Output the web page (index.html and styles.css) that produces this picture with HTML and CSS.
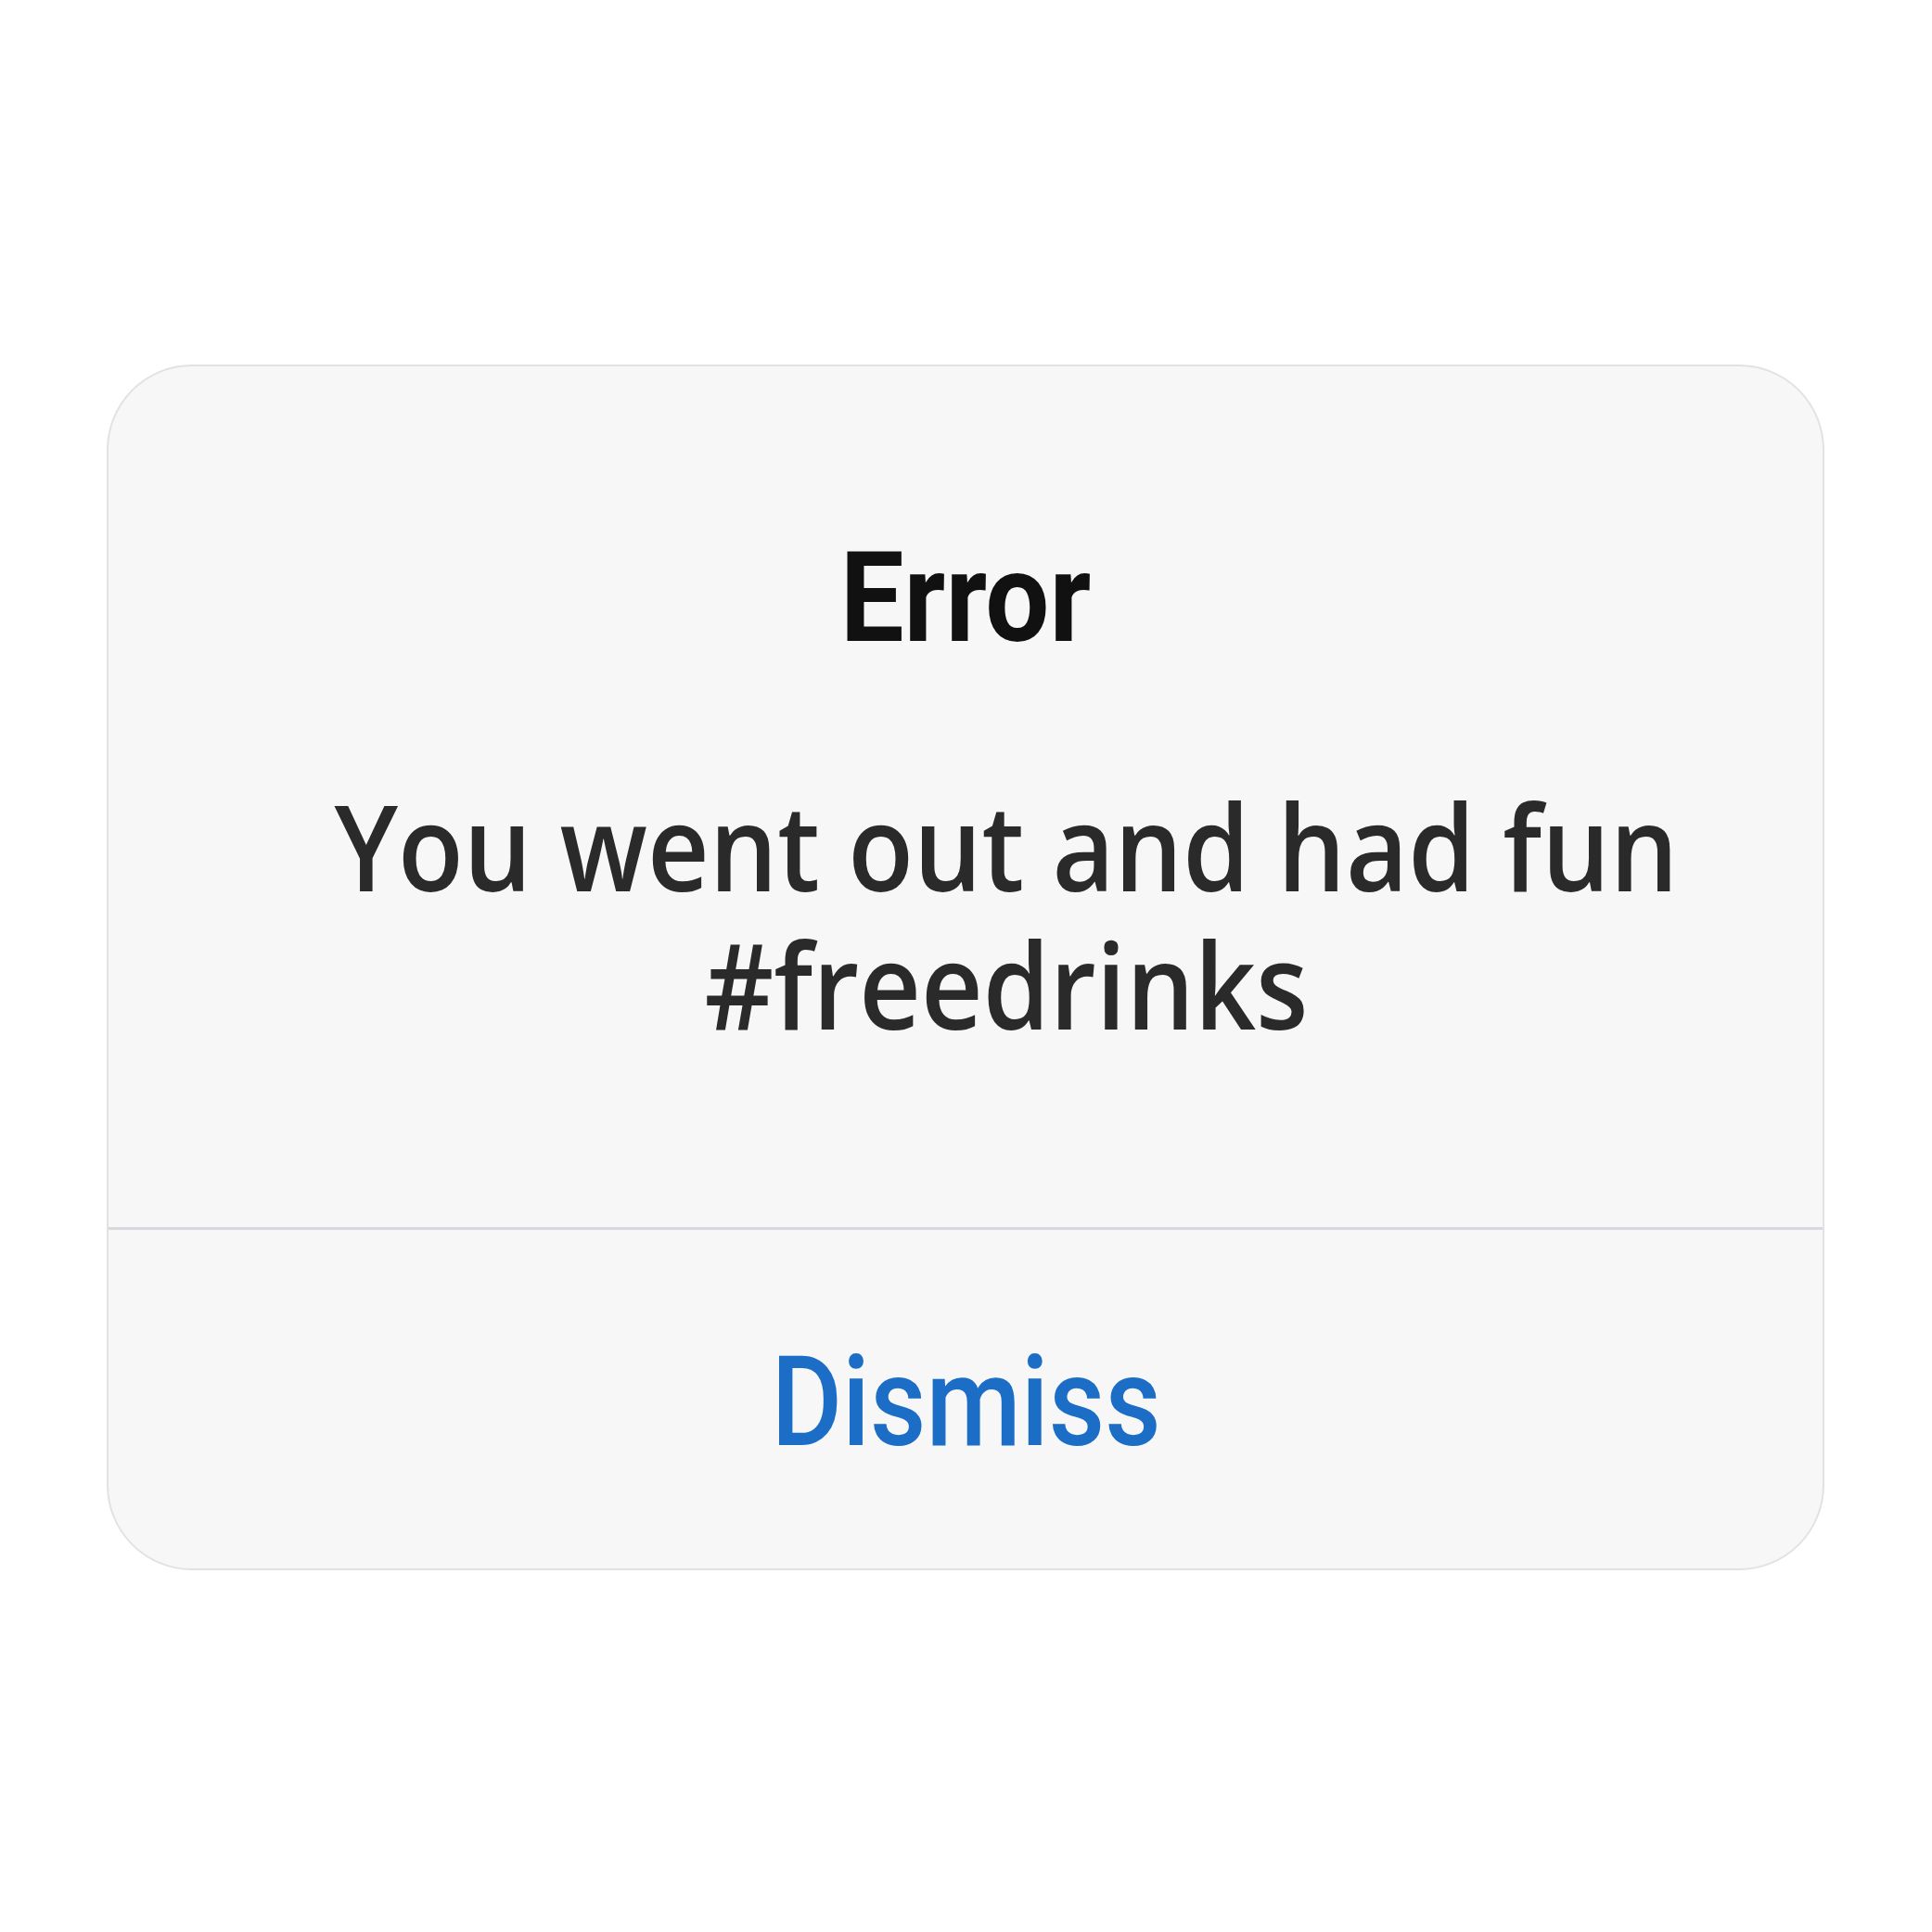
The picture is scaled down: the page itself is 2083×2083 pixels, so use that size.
FILE: index.html
```html
<!DOCTYPE html>
<html lang="en">
<head>
    <meta charset="UTF-8">
    <meta name="viewport" content="width=device-width, initial-scale=1.0">
    <title>Error</title>
    <link rel="stylesheet" href="styles.css">
</head>
<body>
    <div class="dialog">
        <div class="dialog-body">
            <h1 class="title">Error</h1>
            <p class="message">You went out and had fun<br>#freedrinks</p>
        </div>
        <div class="dialog-actions">
            <button class="dismiss">Dismiss</button>
        </div>
    </div>
</body>
</html>
```

FILE: styles.css
```css
body {
    margin: 0;
    background: #ffffff;
    font-family: Roboto, "Liberation Sans", sans-serif;
}
.dialog {
    margin: 393px 0 0 115px;
    width: 1852px;
    height: 1300px;
    box-sizing: border-box;
    background: #f7f7f7;
    border: 2px solid #e2e2e2;
    border-radius: 92px;
    display: flex;
    flex-direction: column;
}
.dialog-body {
    height: 931px;
    box-sizing: border-box;
    padding-top: 182px;
    border-bottom: 3px solid #d8d8de;
    text-align: center;
}
.title {
    margin: 0;
    font-size: 136px;
    font-weight: 700;
    line-height: 1;
    color: #111111;
    transform: scaleX(0.9);
}
.message {
    margin: 124px 0 0 88px;
    font-family: "Open Sans", "Noto Sans", sans-serif;
    font-size: 128px;
    font-weight: 600;
    line-height: 149px;
    color: #2a2a2a;
    transform: scaleX(0.905);
}
.dialog-actions {
    flex: 1;
    display: flex;
    justify-content: center;
    align-items: center;
    padding-top: 8px;
}
.dismiss {
    border: none;
    background: none;
    padding: 0;
    font-family: Roboto, "Liberation Sans", sans-serif;
    font-size: 135px;
    font-weight: 500;
    line-height: 1;
    color: #1c6dc6;
    transform: scaleX(0.87);
}
```
